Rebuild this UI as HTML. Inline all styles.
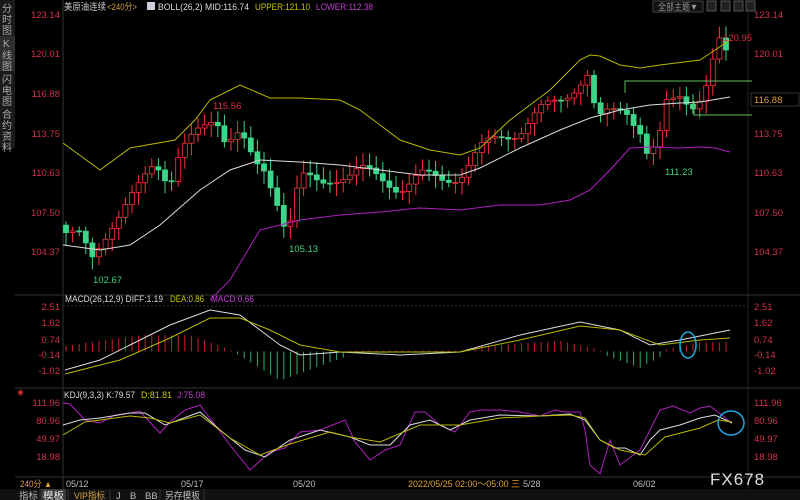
<!DOCTYPE html>
<html><head><meta charset="utf-8"><style>
body{margin:0;background:#000;width:800px;height:500px;overflow:hidden;font-family:"Liberation Sans","Noto Sans CJK SC",sans-serif;}
svg{position:absolute;left:0;top:0}
text{font-family:"Liberation Sans","Noto Sans CJK SC",sans-serif}
</style></head><body>
<svg id="s" width="800" height="500" xmlns="http://www.w3.org/2000/svg">
<rect width="800" height="500" fill="#000"/>
<rect x="0" y="0" width="15" height="148" fill="#1a1a1a"/>
<rect x="0" y="36" width="15" height="35" fill="#2e2e2e"/>
<g fill="#aaa" font-size="10">
<text x="2" y="12">分</text><text x="2" y="23">时</text><text x="2" y="34">图</text>
<text x="3" y="47">K</text><text x="2" y="59">线</text><text x="2" y="70">图</text>
<text x="2" y="83">闪</text><text x="2" y="94">电</text><text x="2" y="105">图</text>
<text x="2" y="118">合</text><text x="2" y="129">约</text><text x="2" y="140">资</text><text x="2" y="151">料</text>
</g>
<line x1="63" y1="0" x2="63" y2="490" stroke="#333"/>
<line x1="748" y1="0" x2="748" y2="490" stroke="#222"/>
<line x1="15" y1="295" x2="800" y2="295" stroke="#333"/>
<line x1="15" y1="388" x2="800" y2="388" stroke="#333"/>
<line x1="15" y1="477" x2="800" y2="477" stroke="#333"/>
<line x1="63" y1="306" x2="748" y2="306" stroke="#333" stroke-dasharray="2,2"/>
<text x="64" y="10" font-size="9.5" fill="#ccc" textLength="42" lengthAdjust="spacingAndGlyphs">美原油连续</text>
<text x="107" y="10" font-size="9.5" fill="#d4a040" textLength="30" lengthAdjust="spacingAndGlyphs">&lt;240分&gt;</text>
<rect x="147" y="2" width="8" height="8" fill="#ccd"/>
<text x="158" y="10" font-size="9.5" fill="#ddd" textLength="91" lengthAdjust="spacingAndGlyphs">BOLL(26,2) MID:116.74</text>
<text x="255" y="10" font-size="9.5" fill="#c8c800" textLength="55" lengthAdjust="spacingAndGlyphs">UPPER:121.10</text>
<text x="316" y="10" font-size="9.5" fill="#c040d0" textLength="57" lengthAdjust="spacingAndGlyphs">LOWER:112.38</text>
<rect x="653" y="1" width="50" height="11" fill="#111" stroke="#444"/>
<text x="658" y="10" font-size="9" fill="#999" textLength="40" lengthAdjust="spacingAndGlyphs">全部主题▼</text>
<rect x="707" y="1" width="9" height="10" fill="#222" stroke="#555"/>
<rect x="721" y="1" width="9" height="10" fill="#222" stroke="#555"/>
<rect x="734" y="1" width="9" height="10" fill="#222" stroke="#555"/>
<rect x="746" y="1" width="9" height="10" fill="#222" stroke="#555"/>
<g font-size="9.5" fill="#d0304a">
<text x="60" y="18" text-anchor="end">123.14</text><text x="60" y="57" text-anchor="end">120.01</text>
<text x="60" y="97" text-anchor="end">116.88</text><text x="60" y="137" text-anchor="end">113.75</text>
<text x="60" y="176" text-anchor="end">110.63</text><text x="60" y="216" text-anchor="end">107.50</text>
<text x="60" y="255" text-anchor="end">104.37</text>
<text x="754" y="18">123.14</text><text x="754" y="57">120.01</text>
<text x="754" y="137">113.75</text><text x="754" y="176">110.63</text><text x="754" y="216">107.50</text><text x="754" y="255">104.37</text>
<text x="60" y="310" text-anchor="end">2.51</text><text x="60" y="326" text-anchor="end">1.62</text>
<text x="60" y="343" text-anchor="end">0.74</text><text x="60" y="358" text-anchor="end">-0.14</text><text x="60" y="374" text-anchor="end">-1.02</text>
<text x="754" y="310">2.51</text><text x="754" y="326">1.62</text><text x="754" y="343">0.74</text><text x="754" y="358">-0.14</text><text x="754" y="374">-1.02</text>
<text x="60" y="406" text-anchor="end">111.96</text><text x="60" y="424" text-anchor="end">80.96</text>
<text x="60" y="442" text-anchor="end">49.97</text><text x="60" y="460" text-anchor="end">18.98</text>
<text x="754" y="406">111.96</text><text x="754" y="424">80.96</text><text x="754" y="442">49.97</text><text x="754" y="460">18.98</text>
</g>
<rect x="751" y="93" width="48" height="13" fill="#000" stroke="#333"/>
<text x="754" y="103" font-size="9.5" fill="#e0a030">116.88</text>
<g id="plot"></g>
<text x="213" y="109" font-size="9.5" fill="#e03040">115.56</text>
<text x="723" y="41" font-size="9.5" fill="#e03040">120.95</text>
<text x="93" y="283" font-size="9.5" fill="#40d080">102.67</text>
<text x="289" y="252" font-size="9.5" fill="#40d080">105.13</text>
<text x="665" y="175" font-size="9.5" fill="#40d080">111.23</text>
<polyline points="625,93 625,81 752,81" fill="none" stroke="#60c060"/>
<polyline points="694,101 694,115 752,115" fill="none" stroke="#60c060"/>
<text x="65" y="302" font-size="9" fill="#ddd" textLength="98" lengthAdjust="spacingAndGlyphs">MACD(26,12,9) DIFF:1.19</text>
<text x="170" y="302" font-size="9" fill="#c8c800" textLength="34" lengthAdjust="spacingAndGlyphs">DEA:0.86</text>
<text x="211" y="302" font-size="9" fill="#c040d0" textLength="43" lengthAdjust="spacingAndGlyphs">MACD:0.66</text>
<text x="17" y="395" font-size="7" fill="#d03030">◉</text>
<text x="64" y="398" font-size="9" fill="#ddd" textLength="71" lengthAdjust="spacingAndGlyphs">KDJ(9,3,3) K:79.57</text>
<text x="141" y="398" font-size="9" fill="#c8c800" textLength="31" lengthAdjust="spacingAndGlyphs">D:81.81</text>
<text x="177" y="398" font-size="9" fill="#c040d0" textLength="28" lengthAdjust="spacingAndGlyphs">J:75.08</text>
<ellipse cx="688" cy="345" rx="8" ry="13" fill="none" stroke="#20a8e0" stroke-width="1.5"/>
<ellipse cx="731" cy="423" rx="13" ry="12" fill="none" stroke="#20a8e0" stroke-width="1.5"/>
<text x="20" y="487" font-size="9" fill="#e0a030" textLength="32" lengthAdjust="spacingAndGlyphs">240分 ▲</text>
<g font-size="9" fill="#bbb"><text x="66" y="487">05/12</text><text x="181" y="487">05/17</text><text x="293" y="487">05/20</text><text x="523" y="487">5/28</text><text x="633" y="487">06/02</text></g>
<text x="408" y="487" font-size="9" fill="#e0a030" textLength="112" lengthAdjust="spacingAndGlyphs">2022/05/25 02:00～05:00 三</text>
<text x="710" y="485" font-size="17" fill="#ddd" letter-spacing="1">FX678</text>
<rect x="0" y="489" width="800" height="11" fill="#111"/>
<rect x="41" y="489" width="25" height="11" fill="#3a3a3a"/>
<g font-size="9.5">
<text x="19" y="499" fill="#bbb" textLength="19" lengthAdjust="spacingAndGlyphs">指标</text>
<text x="43" y="499" fill="#eee" textLength="21" lengthAdjust="spacingAndGlyphs">模板</text>
<text x="74" y="499" fill="#d4a040" textLength="31" lengthAdjust="spacingAndGlyphs">VIP指标</text>
<text x="116" y="499" fill="#bbb">J</text><text x="130" y="499" fill="#bbb">B</text><text x="145" y="499" fill="#bbb">BB</text>
<text x="165" y="499" fill="#bbb" textLength="35" lengthAdjust="spacingAndGlyphs">另存模板</text></g>
<g stroke="#333"><line x1="40" y1="489" x2="40" y2="500"/><line x1="68" y1="489" x2="68" y2="500"/><line x1="110" y1="489" x2="110" y2="500"/><line x1="160" y1="489" x2="160" y2="500"/><line x1="204" y1="489" x2="204" y2="500"/></g>
</svg>
<script>
var g=document.getElementById('plot'),NS='http://www.w3.org/2000/svg';
function el(n,a){var e=document.createElementNS(NS,n);for(var k in a)e.setAttribute(k,a[k]);g.appendChild(e);return e;}
function py(p){return 15+(123.14-p)*12.63;}
function interp(pts,x){for(var i=1;i<pts.length;i++){if(x<=pts[i][0]){var a=pts[i-1],b=pts[i];return a[1]+(b[1]-a[1])*(x-a[0])/(b[0]-a[0]);}}return pts[pts.length-1][1];}
function line(pts,c){el('polyline',{points:pts.map(function(p){return p.join(',')}).join(' '),fill:'none',stroke:c,'stroke-width':1});}
var P=[[63,106],[80,105.5],[92,103.8],[100,105],[110,106.5],[125,108],[140,109.5],[155,111.5],[170,110],[180,112.5],[195,113.5],[210,114.5],[215,115.2],[225,113.5],[240,114],[255,111],[265,110.5],[280,108],[287,106],[300,110.5],[320,109.5],[340,110.5],[360,111],[380,110],[400,109.5],[420,110.5],[440,110],[460,110.5],[480,112.5],[500,113.5],[520,114],[540,115.5],[560,116.5],[575,117.5],[590,118.5],[596,114.5],[610,115.5],[625,116],[640,114],[647,112],[658,112.5],[665,116],[680,117],[695,116],[705,117],[712,119],[720,121],[730,119.5]];
var prev=106.5;
for(var i=0;i<101;i++){var x=66+i*6.6;var c=interp(P,x)+Math.sin(i*7)*0.5;var o=prev;prev=c;
var hi=Math.max(o,c)+0.3+Math.abs(Math.sin(i*3.1))*0.7,lo=Math.min(o,c)-0.3-Math.abs(Math.cos(i*2.3))*0.7;
var up=c>=o,col=up?'#ff3040':'#3cd58a';
el('line',{x1:x,y1:py(hi),x2:x,y2:py(lo),stroke:col});
var t=py(Math.max(o,c)),h=Math.max(1,py(Math.min(o,c))-t);
el('rect',{x:x-2.5,y:t,width:5,height:h,fill:up?'#000':col,stroke:col,'stroke-width':0.8});}
line([[63,143],[100,170],[130,148],[175,140],[195,120],[210,100],[240,85],[270,98],[300,98],[340,100],[360,110],[380,125],[400,140],[430,150],[460,155],[480,148],[510,120],[550,90],[580,60],[590,55],[600,56],[620,65],[640,68],[660,65],[700,60],[715,50],[730,40]],'#b8b800');
line([[210,300],[230,280],[260,230],[300,220],[340,215],[380,212],[420,208],[460,210],[500,205],[540,205],[570,200],[590,190],[610,170],[630,148],[650,147],[680,148],[700,147],[715,148],[730,152]],'#b020c0');
line([[63,245],[100,250],[130,245],[160,225],[200,190],[230,170],[260,160],[300,162],[340,165],[380,170],[420,175],[460,175],[480,168],[520,148],[560,130],[590,118],[620,110],[650,105],[680,103],[700,102],[730,97]],'#ddd');
var H=[[65,0.3],[100,0.6],[140,0.9],[190,0.9],[230,0.1],[236,-0.1],[280,-1.6],[300,-1.2],[345,-0.3],[350,0.05],[470,0.05],[480,0.3],[560,0.6],[600,0.1],[605,-0.2],[640,-0.9],[660,-0.3],[665,0.1],[700,0.5],[730,0.5]];
for(var i=0;i<101;i++){var x=66+i*6.6;var v=interp(H,x);var z=351.5,y=z-v*18.13;
el('line',{x1:x,y1:z,x2:x,y2:y,stroke:v>=0?'#d02030':'#30b070','stroke-width':1});}
line([[65,370],[100,360],[130,345],[170,325],[210,310],[240,315],[260,330],[280,345],[300,355],[340,352],[400,355],[460,352],[520,335],[580,322],[620,330],[650,345],[680,340],[720,332],[730,330]],'#ddd');
line([[65,374],[120,360],[170,338],[210,318],[240,318],[270,330],[300,345],[340,352],[460,352],[520,340],[580,326],[620,330],[660,345],[700,340],[730,338]],'#b8b800');
line([[63,403],[70,404],[85,420],[100,423],[115,415],[130,413],[140,411],[145,417],[160,433],[170,422],[185,410],[200,405],[215,425],[230,445],[250,470],[270,452],[285,448],[300,432],[320,430],[345,420],[355,442],[370,460],[385,450],[400,445],[415,412],[425,412],[440,425],[455,432],[470,412],[480,410],[500,410],[520,412],[540,416],[555,410],[565,412],[580,412],[585,430],[590,465],[600,474],[610,440],[620,465],[640,450],[650,430],[660,410],[673,406],[690,413],[700,408],[710,406],[732,423]],'#b020c0');
line([[63,425],[80,420],[100,418],[130,413],[145,413],[165,425],[200,412],[220,430],[245,450],[265,457],[290,440],[320,430],[350,437],[370,445],[390,445],[410,425],[430,420],[450,430],[470,420],[500,415],[540,416],[570,414],[585,420],[600,440],[615,448],[625,448],[640,455],[650,440],[660,430],[680,425],[700,418],[715,415],[732,423]],'#ddd');
line([[63,435],[85,422],[100,420],[130,416],[150,418],[170,423],[200,415],[230,438],[260,455],[290,444],[330,432],[350,437],[380,442],[420,425],[460,425],[500,418],[540,416],[570,415],[585,418],[600,440],[620,450],[645,455],[665,437],[700,428],[718,420],[732,422]],'#b8b800');
</script>
</body></html>
